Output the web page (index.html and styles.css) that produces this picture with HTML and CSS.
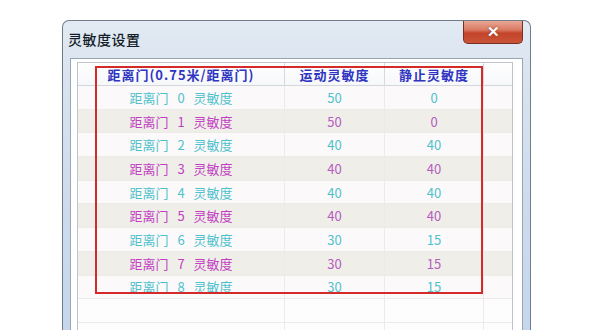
FILE: index.html
```html
<!DOCTYPE html>
<html lang="zh-CN">
<head>
  <meta charset="UTF-8" />
  <title>灵敏度设置</title>
  <link rel="stylesheet" href="styles.css">
</head>
<body>
  <div class="window">
    <div class="titlebar">
      <span class="title">灵敏度设置</span>
      <button class="close">&#x2715;</button>
    </div>
    <div class="client">
      <div class="listview">
        <div class="row head">
          <div class="cell">距离门(0.75米/距离门)</div>
          <div class="cell">运动灵敏度</div>
          <div class="cell">静止灵敏度</div>
          <div class="cell"></div>
        </div>
        <div class="row cyan"><div class="cell">距离门 0 灵敏度</div><div class="cell">50</div><div class="cell">0</div><div class="cell"></div></div>
        <div class="row pink"><div class="cell">距离门 1 灵敏度</div><div class="cell">50</div><div class="cell">0</div><div class="cell"></div></div>
        <div class="row cyan"><div class="cell">距离门 2 灵敏度</div><div class="cell">40</div><div class="cell">40</div><div class="cell"></div></div>
        <div class="row pink"><div class="cell">距离门 3 灵敏度</div><div class="cell">40</div><div class="cell">40</div><div class="cell"></div></div>
        <div class="row cyan"><div class="cell">距离门 4 灵敏度</div><div class="cell">40</div><div class="cell">40</div><div class="cell"></div></div>
        <div class="row pink"><div class="cell">距离门 5 灵敏度</div><div class="cell">40</div><div class="cell">40</div><div class="cell"></div></div>
        <div class="row cyan"><div class="cell">距离门 6 灵敏度</div><div class="cell">30</div><div class="cell">15</div><div class="cell"></div></div>
        <div class="row pink"><div class="cell">距离门 7 灵敏度</div><div class="cell">30</div><div class="cell">15</div><div class="cell"></div></div>
        <div class="row cyan"><div class="cell">距离门 8 灵敏度</div><div class="cell">30</div><div class="cell">15</div><div class="cell"></div></div>
        <div class="row empty"><div class="cell"></div><div class="cell"></div><div class="cell"></div><div class="cell"></div></div>
        <div class="row empty"><div class="cell"></div><div class="cell"></div><div class="cell"></div><div class="cell"></div></div>
        <div class="highlight"></div>
      </div>
    </div>
  </div>
</body>
</html>
```

FILE: styles.css
```css
body {
  margin: 0;
  background: #ffffff;
  font-family: "Noto Sans CJK SC", "DejaVu Sans", sans-serif;
}

.window {
  box-sizing: border-box;
  width: 469px;
  height: 310px;
  margin: 20px 0 0 62px;
  padding: 0 7px;
  border: 1px solid #6f7c8a;
  border-bottom: none;
  border-radius: 7px 7px 0 0;
  background: linear-gradient(180deg, #e2eaf3 0%, #d8e3ef 20%, #cddbec 60%, #c6d7ec 100%);
  display: flex;
  flex-direction: column;
  overflow: hidden;
}

.titlebar {
  height: 37px;
  display: flex;
  justify-content: space-between;
  align-items: flex-start;
  flex-shrink: 0;
}

.title {
  margin: 8px 0 0 -2px;
  font-size: 14px;
  font-weight: 500;
  color: #141c28;
  letter-spacing: 0.5px;
}

.close {
  width: 60px;
  height: 23px;
  padding: 0;
  border: 1px solid #7a2e22;
  border-top: none;
  border-radius: 0 0 5px 5px;
  background: linear-gradient(180deg, #e9a796 0%, #d97a62 40%, #c4442a 55%, #c95438 100%);
  color: #ffffff;
  font-size: 15px;
  font-weight: bold;
  line-height: 22px;
  text-shadow: 0 0 2px #7a2e22;
}

.client {
  flex: 1;
  border: 1px solid #98a5b4;
  border-bottom: none;
  background: #ffffff;
  padding: 3px 9px 0 6px;
}

.listview {
  position: relative;
  height: 100%;
  border: 1px solid #bcc3cb;
  border-bottom: none;
  background: #ffffff;
}

.row {
  display: grid;
  grid-template-columns: 207px 100px 99px 1fr;
  height: 23.7px;
  align-items: center;
  font-size: 13px;
}

.cell {
  height: 100%;
  display: flex;
  align-items: center;
  justify-content: center;
  border-right: 1px solid #ecebe8;
  border-bottom: 1px solid #ecebe8;
  box-sizing: border-box;
  white-space: pre;
  word-spacing: 6px;
}

.row .cell:last-child {
  border-right: none;
}

.head {
  height: 23px;
  background: linear-gradient(180deg, #ffffff 0%, #f6f7f9 100%);
  color: #2f35c2;
  font-size: 13px;
  font-weight: bold;
}

.head .cell {
  letter-spacing: 1px;
  border-right: 1px solid #d6d9de;
  border-bottom: 1px solid #d3d6db;
}

.cyan {
  background: #fbf9f9;
  color: #4fc1cd;
}

.pink {
  background: #efeee9;
  color: #c240c2;
}

.pink .cell:nth-child(2),
.pink .cell:nth-child(3) {
  color: #b45cc0;
}

.empty {
  background: #fdfdfd;
}

.highlight {
  position: absolute;
  left: 17px;
  top: 3px;
  width: 388px;
  height: 228px;
  box-sizing: border-box;
  border: 2px solid #d42a2a;
}
```
